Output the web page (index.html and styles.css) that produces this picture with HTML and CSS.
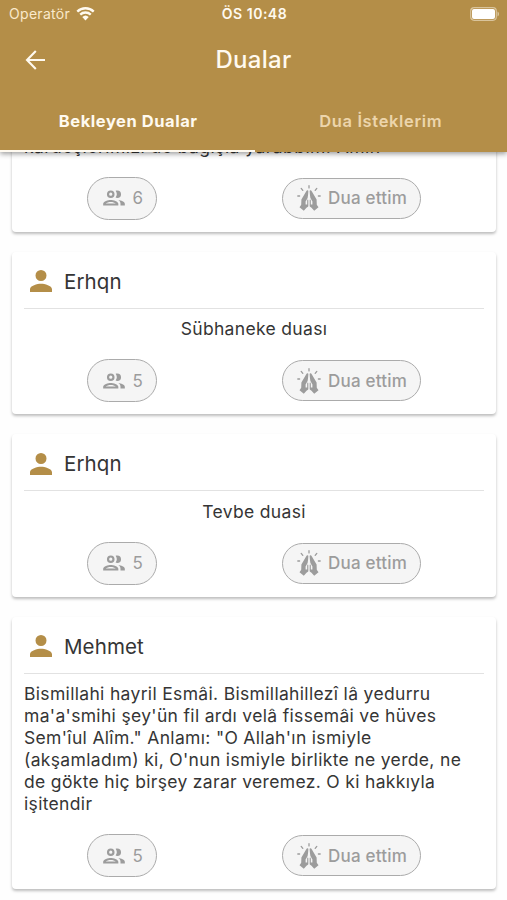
FILE: index.html
```html
<!DOCTYPE html>
<html lang="tr">
<head>
<meta charset="utf-8">
<title>Dualar</title>
<link rel="stylesheet" href="styles.css">
</head>
<body>
<svg class="defs" width="0" height="0">
  <symbol id="person" viewBox="4 4 16 16"><path d="M12 12a4 4 0 1 0 0-8 4 4 0 0 0 0 8zm0 2c-2.670 0-8 1.340-8 4v2h16v-2c0-2.660-5.330-4-8-4z"/></symbol>
  <symbol id="people" viewBox="0 0 24 24"><path fill-rule="evenodd" d="M9 13.75c-2.34 0-7 1.17-7 3.5V19h14v-1.75c0-2.33-4.66-3.5-7-3.5zM4.34 17c.84-.58 2.87-1.25 4.66-1.25s3.82.67 4.66 1.25zM9 12a3.5 3.5 0 1 0 0-7 3.5 3.5 0 0 0 0 7zm0-5a1.5 1.5 0 1 1 0 3 1.5 1.5 0 0 1 0-3zm7.04 6.81c1.16.84 1.96 1.96 1.96 3.44V19h4v-1.75c0-2.02-3.5-3.17-5.96-3.44zM15 12a3.5 3.5 0 1 0 0-7c-.54 0-1.04.13-1.5.35a5.47 5.47 0 0 1 0 6.3c.46.22.96.35 1.5.35z"/></symbol>
  <symbol id="hands" viewBox="0 0 24 26">
    <path d="M10.800 5.300c.7.1.9.7.8 1.400l-1 6.300-2 3.600v3l1.600-.2v-3.800c0-1.600 1.400-1.600 1.400 0v5.600l-2.100 1.600-2.700 3-4.300-3.600 1.700-2.500.2-5.200L9.100 6.600c.4-.9 1-1.400 1.700-1.300zM13.200 5.300c-.7.1-.9.7-.8 1.400l1 6.300 2 3.600v3l-1.600-.2v-3.800c0-1.600-1.400-1.600-1.400 0v5.600l2.100 1.600 2.700 3 4.300-3.600-1.700-2.500-.2-5.200-4.700-7.900c-.4-.9-1-1.400-1.700-1.300z"/>
    <path class="cut" d="M12 5v21"/>
    <path class="ray" d="M12 .7v2.200M4.200 3.400l1.600 1.900M19.800 3.400l-1.600 1.900M.8 11h1.800M21.400 11h1.800"/>
  </symbol>
</svg>
<div class="screen">
  <header class="top">
    <div class="status">
      <span class="carrier">Operatör <svg class="wifi" viewBox="0 0 18 14"><path d="M1.200 5.200a11.200 11.200 0 0 1 15.600 0M4 8.100a7.200 7.200 0 0 1 10 0"/><path class="dot" d="M5.900 10.400a4.500 4.500 0 0 1 6.200 0L9 13.600z"/></svg></span>
      <span class="clock">ÖS 10:48</span>
      <svg class="battery" viewBox="0 0 30 14"><rect class="shell" x=".7" y=".7" width="25.600" height="12.600" rx="3.500"/><rect class="level" x="2" y="2" width="23" height="10" rx="2"/><path class="shell-tip" d="M27.500 4.500c2 .8 2 4.200 0 5z"/></svg>
    </div>
    <div class="bar">
      <svg class="back" viewBox="0 0 20 20"><path d="M19.500 10H1.800M10.300 1 1.500 10l8.800 9"/></svg>
      <h1>Dualar</h1>
    </div>
    <nav class="tabs">
      <span class="tab active">Bekleyen Dualar</span>
      <span class="tab">Dua İsteklerim</span>
    </nav>
  </header>
  <main class="list">
    <article class="card first">
      <p class="long">kardeşlerimizi de bağışla yarabbim. Amin</p>
      <div class="actions">
        <div class="cell"><span class="pill count"><svg><use href="#people"/></svg>6</span></div>
        <div class="cell"><span class="pill pray"><svg><use href="#hands"/></svg>Dua ettim</span></div>
      </div>
    </article>
    <article class="card">
      <h2><svg><use href="#person"/></svg>Erhqn</h2>
      <p>Sübhaneke duası</p>
      <div class="actions">
        <div class="cell"><span class="pill count"><svg><use href="#people"/></svg>5</span></div>
        <div class="cell"><span class="pill pray"><svg><use href="#hands"/></svg>Dua ettim</span></div>
      </div>
    </article>
    <article class="card">
      <h2><svg><use href="#person"/></svg>Erhqn</h2>
      <p>Tevbe duasi</p>
      <div class="actions">
        <div class="cell"><span class="pill count"><svg><use href="#people"/></svg>5</span></div>
        <div class="cell"><span class="pill pray"><svg><use href="#hands"/></svg>Dua ettim</span></div>
      </div>
    </article>
    <article class="card">
      <h2><svg><use href="#person"/></svg>Mehmet</h2>
      <p class="long">Bismillahi hayril Esmâi. Bismillahillezî lâ yedurru<br>ma'a'smihi şey'ün fil ardı velâ fissemâi ve hüves<br>Sem'îul Alîm." Anlamı: "O Allah'ın ismiyle<br>(akşamladım) ki, O'nun ismiyle birlikte ne yerde, ne<br>de gökte hiç birşey zarar veremez. O ki hakkıyla<br>işitendir</p>
      <div class="actions">
        <div class="cell"><span class="pill count"><svg><use href="#people"/></svg>5</span></div>
        <div class="cell"><span class="pill pray"><svg><use href="#hands"/></svg>Dua ettim</span></div>
      </div>
    </article>
  </main>
</div>
</body>
</html>
```
FILE: styles.css
```css
* { box-sizing: border-box; }
body { margin: 0; font-family: Inter, "Liberation Sans", sans-serif; background: #fefefe; color: #353535; }
.defs { position: absolute; }
h1, h2, p { margin: 0; font-weight: 400; }
.screen { height: 900px; display: flex; flex-direction: column; overflow: hidden; }

.top { position: relative; z-index: 1; flex: none; height: 152px; background: #b48e48; color: #fffaf0; box-shadow: 0 2px 5px rgba(0,0,0,.38); display: flex; flex-direction: column; }
.status { display: grid; grid-template-columns: 1fr auto 1fr; align-items: center; height: 27px; padding: 0 7px 0 9px; font-size: 14px; }
.carrier { display: flex; align-items: center; gap: 6px; color: #fae9cb; letter-spacing: .3px; }
.wifi { width: 19px; height: 15px; fill: none; stroke: #fffaf0; stroke-width: 2.2; }
.wifi .dot { fill: #fffaf0; stroke: none; }
.clock { font-weight: 600; font-size: 14px; letter-spacing: .5px; }
.battery { width: 30px; height: 14px; justify-self: end; }
.shell { fill: none; stroke: #d9c49c; stroke-width: 1.2; }
.shell-tip { fill: #d9c49c; }
.level { fill: #fff; }
.bar { height: 65px; display: grid; grid-template-columns: 1fr auto 1fr; align-items: center; padding: 0 25px; }
.back { width: 21px; height: 20px; fill: none; stroke: #fffaf0; stroke-width: 2.1; }
h1 { font-size: 24px; line-height: 30px; font-weight: 500; letter-spacing: .3px; }
.tabs { flex: 1; display: flex; }
.tab { flex: 1; display: flex; align-items: center; justify-content: center; font-size: 16.5px; font-weight: 600; letter-spacing: .65px; color: #ecd5ac; padding-bottom: 2px; }
.tab.active { color: #fffaf0; font-weight: 700; letter-spacing: .55px; border-bottom: 2px solid #fffaf0; padding: 0 0 0 2px; }

.list { flex: 1; min-height: 0; display: flex; flex-direction: column; justify-content: flex-end; gap: 20.3px; padding: 0 11px 11px 12px; }
.card { flex: none; background: #fff; border-radius: 4px; padding: 0 12px 12px; box-shadow: 0 2px 3px rgba(0,0,0,.26); }
h2 { height: 57px; display: flex; align-items: center; gap: 12px; padding: 3px 0 0 6px; border-bottom: 1.5px solid #e2e2e2; font-size: 20.5px; letter-spacing: .1px; }
h2 svg { width: 22px; height: 22px; fill: #b48e48; }
.card p { margin: 9.4px 0 18.8px; font-size: 17.5px; line-height: 22px; letter-spacing: .33px; text-align: center; white-space: nowrap; }
.card p.long { text-align: left; }
.card.first p { margin-bottom: 19px; letter-spacing: .45px; }
.actions { display: flex; height: 43px; }
.cell { display: flex; align-items: center; justify-content: center; width: 195px; }
.cell + .cell { flex: 1; }
.pill { display: flex; align-items: center; border: 1.5px solid #ababab; background: #f5f5f5; color: #9c9c9c; font-size: 17px; fill: #9c9c9c; white-space: nowrap; }
.count { width: 70px; height: 43px; border-radius: 22px; padding-left: 13px; gap: 6px; }
.count svg { width: 26px; height: 26px; }
.pray { width: 139px; height: 41px; border-radius: 21px; padding-left: 14px; gap: 7px; font-weight: 500; letter-spacing: .2px; }
.pray svg { width: 24px; height: 26px; }
.cut { fill: none; stroke: #f5f5f5; stroke-width: .9; }
.ray { fill: none; stroke: #9c9c9c; stroke-width: 1.3; stroke-linecap: round; }
```
